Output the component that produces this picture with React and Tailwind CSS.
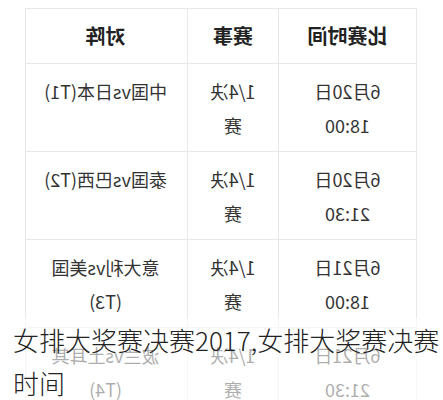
import React from "react";

const rows = [
  { time: ["6月20日", "18:00"], stage: ["1/4决", "赛"], match: ["中国vs日本(T1)"] },
  { time: ["6月20日", "21:30"], stage: ["1/4决", "赛"], match: ["泰国vs巴西(T2)"] },
  { time: ["6月21日", "18:00"], stage: ["1/4决", "赛"], match: ["意大利vs美国", "(T3)"] },
  { time: ["6月21日", "21:30"], stage: ["1/4决", "赛"], match: ["波兰vs土耳其", "(T4)"] },
];

function Lines({ items }) {
  return (
    <div className="flex flex-col items-center">
      {items.map((t, i) => (
        <span key={i} className="block whitespace-nowrap">
          {t}
        </span>
      ))}
    </div>
  );
}

export default function App() {
  return (
    <div
      className="relative w-[443px] h-[400px] overflow-hidden bg-white"
      style={{ fontFamily: '"Noto Sans CJK SC", "Noto Sans", sans-serif' }}
    >
      <div className="w-[443px] -scale-x-100 pt-[8px]">
        <div className="ml-[26px] w-[392px] border border-[#e8e8e8] text-[#333] text-[18px] leading-[34px]">
          <div className="grid grid-cols-[138px_91px_163px] h-[55px] border-b border-[#e8e8e8] text-[20px] font-bold text-[#222]">
            <div className="flex items-center justify-center border-r border-[#e8e8e8]">比赛时间</div>
            <div className="flex items-center justify-center border-r border-[#e8e8e8]">赛事</div>
            <div className="flex items-center justify-center">对阵</div>
          </div>
          {rows.map((r, i) => (
            <div
              key={i}
              className="grid grid-cols-[138px_91px_163px] h-[88px] border-b border-[#e8e8e8]"
            >
              <div className="flex items-start justify-center pt-[10px] border-r border-[#e8e8e8]">
                <Lines items={r.time} />
              </div>
              <div className="flex items-start justify-center pt-[10px] border-r border-[#e8e8e8]">
                <Lines items={r.stage} />
              </div>
              <div className="flex items-start justify-center pt-[10px]">
                <Lines items={r.match} />
              </div>
            </div>
          ))}
        </div>
      </div>
      <div className="absolute left-0 right-0 top-[318px] bottom-0 bg-white/60 pl-[13px]">
        <div className="text-[26px] leading-[43px] font-light text-[#222] whitespace-nowrap">
          女排大奖赛决赛2017,女排大奖赛决赛
          <br />
          时间
        </div>
      </div>
    </div>
  );
}
